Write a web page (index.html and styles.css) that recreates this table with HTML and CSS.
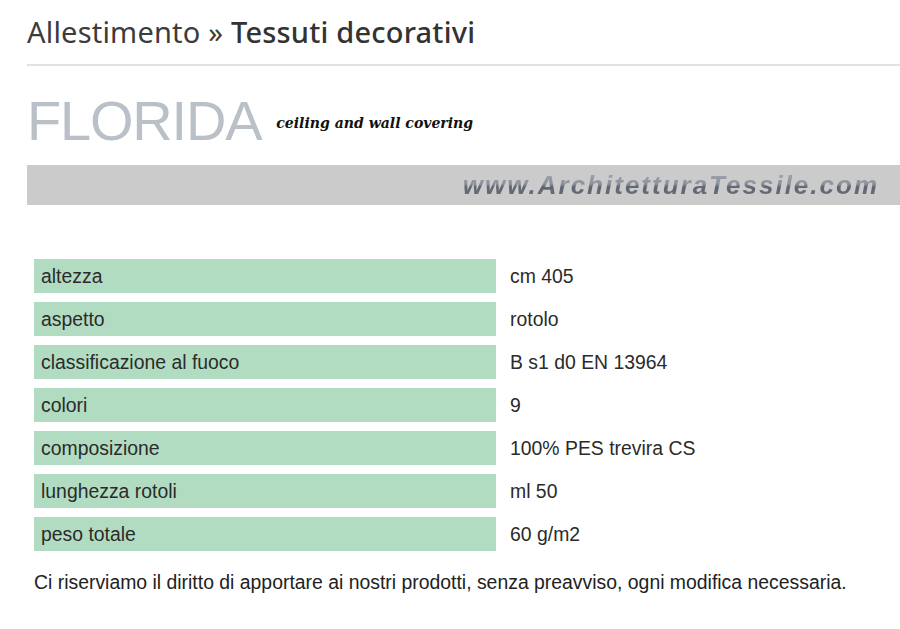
FILE: index.html
```html
<!DOCTYPE html>
<html lang="it">
<head>
<meta charset="utf-8">
<title>Florida - Tessuti decorativi</title>
<link rel="stylesheet" href="styles.css">
</head>
<body>
<div class="page">
  <h1 class="crumb"><span class="crumb-light">Allestimento »</span> <span class="crumb-strong">Tessuti decorativi</span></h1>
  <div class="rule"></div>
  <div class="product-head">
    <span class="product-name">FLORIDA</span>
    <span class="product-sub">ceiling and wall covering</span>
  </div>
  <div class="site-bar"><span class="site-text">www.ArchitetturaTessile.com</span></div>
  <table class="specs">
    <tr><td class="label">altezza</td><td class="value">cm 405</td></tr>
    <tr><td class="label">aspetto</td><td class="value">rotolo</td></tr>
    <tr><td class="label">classificazione al fuoco</td><td class="value">B s1 d0 EN 13964</td></tr>
    <tr><td class="label">colori</td><td class="value">9</td></tr>
    <tr><td class="label">composizione</td><td class="value">100% PES trevira CS</td></tr>
    <tr><td class="label">lunghezza rotoli</td><td class="value">ml 50</td></tr>
    <tr><td class="label">peso totale</td><td class="value">60 g/m2</td></tr>
  </table>
  <p class="note">Ci riserviamo il diritto di apportare ai nostri prodotti, senza preavviso, ogni modifica necessaria.</p>
</div>
</body>
</html>
```

FILE: styles.css
```css
html, body {
  margin: 0;
  padding: 0;
  background: #ffffff;
}
.page {
  padding: 14px 0 0 27px;
}
.crumb {
  margin: 0;
  font-family: "Noto Sans", "Open Sans", sans-serif;
  font-size: 29px;
  line-height: 36px;
  font-weight: 400;
  letter-spacing: 0.2px;
  color: #3c3c3c;
}
.crumb-light {
  font-weight: 400;
}
.crumb-strong {
  font-weight: 500;
  color: #333333;
}
.rule {
  height: 2px;
  background: #e2e2e2;
  margin-top: 14px;
}
.product-head {
  display: flex;
  align-items: baseline;
  margin-top: 25px;
  height: 74px;
}
.product-name {
  font-family: "Liberation Sans", Arial, sans-serif;
  font-size: 56px;
  line-height: 60px;
  color: #b9c0c7;
  letter-spacing: -1.2px;
}
.product-sub {
  margin-left: 15px;
  font-family: "DejaVu Serif Condensed", "DejaVu Serif", Georgia, serif;
  font-style: italic;
  font-weight: 700;
  font-size: 15.6px;
  color: #111111;
  position: relative;
  top: -12px;
}
.site-bar {
  height: 40px;
  background: #cbcbcb;
  display: flex;
  justify-content: flex-end;
  align-items: center;
  padding-right: 21px;
}
.site-text {
  font-family: "Liberation Sans", Arial, sans-serif;
  font-style: italic;
  font-weight: 700;
  font-size: 26px;
  letter-spacing: 2px;
  background: linear-gradient(#a3a9b1 0%, #8c929b 45%, #5f6570 55%, #6f7580 100%);
  -webkit-background-clip: text;
  background-clip: text;
  color: transparent;
}
.specs {
  margin-top: 45px;
  margin-left: 0;
  border-collapse: separate;
  border-spacing: 7px 9px;
  font-family: "Liberation Sans", Arial, sans-serif;
  font-size: 19.4px;
  color: #2b2b2b;
}
.specs td {
  height: 34px;
  padding: 0 7px;
  box-sizing: border-box;
}
.label {
  width: 462px;
  background: #b2dcc2;
}
.value {
  padding-left: 7px;
}
.note {
  margin: 11px 0 0 7px;
  font-family: "Liberation Sans", Arial, sans-serif;
  font-size: 19.4px;
  color: #222222;
}
```
